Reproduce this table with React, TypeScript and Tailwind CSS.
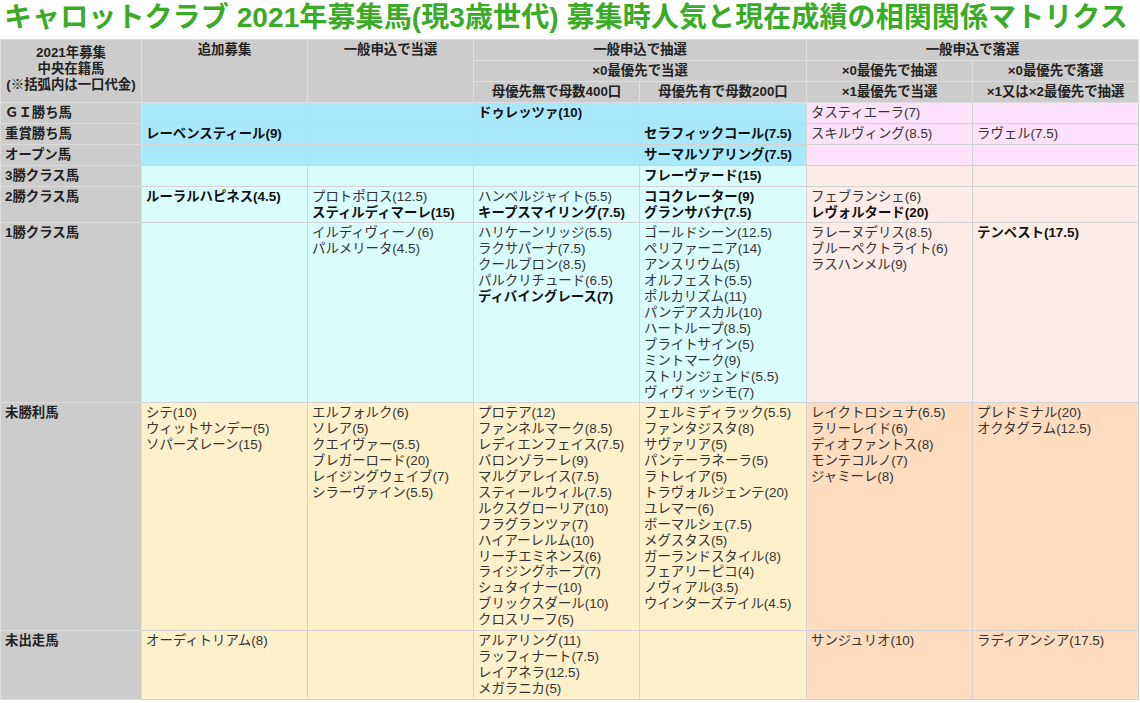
import React from "react";

type E = [string, boolean?];

const FONT = { fontFamily: '"Liberation Sans", "Noto Sans CJK JP", sans-serif' };

const rows: { label: string; g: number; cells: E[][] }[] = [
  { label: "ＧＩ勝ち馬", g: 0, cells: [[], [], [["ドゥレッツァ(10)", true]], [], [["タスティエーラ(7)"]], []] },
  {
    label: "重賞勝ち馬",
    g: 0,
    cells: [[["レーベンスティール(9)", true]], [], [], [["セラフィックコール(7.5)", true]], [["スキルヴィング(8.5)"]], [["ラヴェル(7.5)"]]],
  },
  { label: "オープン馬", g: 0, cells: [[], [], [], [["サーマルソアリング(7.5)", true]], [], []] },
  { label: "3勝クラス馬", g: 1, cells: [[], [], [], [["フレーヴァード(15)", true]], [], []] },
  {
    label: "2勝クラス馬",
    g: 1,
    cells: [
      [["ルーラルハピネス(4.5)", true]],
      [["プロトポロス(12.5)"], ["スティルディマーレ(15)", true]],
      [["ハンベルジャイト(5.5)"], ["キープスマイリング(7.5)", true]],
      [["ココクレーター(9)", true], ["グランサバナ(7.5)", true]],
      [["フェブランシェ(6)"], ["レヴォルタード(20)", true]],
      [],
    ],
  },
  {
    label: "1勝クラス馬",
    g: 1,
    cells: [
      [],
      [["イルディヴィーノ(6)"], ["パルメリータ(4.5)"]],
      [["ハリケーンリッジ(5.5)"], ["ラクサパーナ(7.5)"], ["クールブロン(8.5)"], ["パルクリチュード(6.5)"], ["ディバイングレース(7)", true]],
      [
        ["ゴールドシーン(12.5)"],
        ["ペリファーニア(14)"],
        ["アンスリウム(5)"],
        ["オルフェスト(5.5)"],
        ["ポルカリズム(11)"],
        ["パンデアスカル(10)"],
        ["ハートループ(8.5)"],
        ["ブライトサイン(5)"],
        ["ミントマーク(9)"],
        ["ストリンジェンド(5.5)"],
        ["ヴィヴィッシモ(7)"],
      ],
      [["ラレーヌデリス(8.5)"], ["ブルーペクトライト(6)"], ["ラスハンメル(9)"]],
      [["テンペスト(17.5)", true]],
    ],
  },
  {
    label: "未勝利馬",
    g: 2,
    cells: [
      [["シテ(10)"], ["ウィットサンデー(5)"], ["ソパーズレーン(15)"]],
      [["エルフォルク(6)"], ["ソレア(5)"], ["クエイヴァー(5.5)"], ["ブレガーロード(20)"], ["レイジングウェイブ(7)"], ["シラーヴァイン(5.5)"]],
      [
        ["プロテア(12)"],
        ["ファンネルマーク(8.5)"],
        ["レディエンフェイス(7.5)"],
        ["バロンゾラーレ(9)"],
        ["マルグアレイス(7.5)"],
        ["スティールウィル(7.5)"],
        ["ルクスグローリア(10)"],
        ["フラグランツァ(7)"],
        ["ハイアーレルム(10)"],
        ["リーチエミネンス(6)"],
        ["ライジングホープ(7)"],
        ["シュタイナー(10)"],
        ["ブリックスダール(10)"],
        ["クロスリーフ(5)"],
      ],
      [
        ["フェルミディラック(5.5)"],
        ["ファンタジスタ(8)"],
        ["サヴァリア(5)"],
        ["パンテーラネーラ(5)"],
        ["ラトレイア(5)"],
        ["トラヴォルジェンテ(20)"],
        ["ユレマー(6)"],
        ["ボーマルシェ(7.5)"],
        ["メグスタス(5)"],
        ["ガーランドスタイル(8)"],
        ["フェアリーピコ(4)"],
        ["ノヴィアル(3.5)"],
        ["ウインターズテイル(4.5)"],
      ],
      [["レイクトロシュナ(6.5)"], ["ラリーレイド(6)"], ["ディオファントス(8)"], ["モンテコルノ(7)"], ["ジャミーレ(8)"]],
      [["プレドミナル(20)"], ["オクタグラム(12.5)"]],
    ],
  },
  {
    label: "未出走馬",
    g: 2,
    cells: [
      [["オーディトリアム(8)"]],
      [],
      [["アルアリング(11)"], ["ラッフィナート(7.5)"], ["レイアネラ(12.5)"], ["メガラニカ(5)"]],
      [],
      [["サンジュリオ(10)"]],
      [["ラディアンシア(17.5)"]],
    ],
  },
];

const leftBg = ["bg-[#a9e8fa]", "bg-[#dafcfd]", "bg-[#fff0cc]"];
const rightBg = ["bg-[#fde1fa]", "bg-[#fdebe8]", "bg-[#fddcbf]"];

const td = "border border-[#d3d3d3] px-[4px] pt-[2px] pb-[2px] leading-[15.9px] align-top";
const th = "border border-[#dedede] bg-[#cccccc] px-[4px] pt-[2px] pb-[2px] leading-[16px] font-bold text-[#222222] text-center";

export default function App() {
  return (
    <div className="w-[1140px] h-[703px] overflow-hidden bg-white text-[13.4px]" style={FONT}>
      <div className="h-[39px] pl-[4px] pt-[1px] text-[28px] leading-[34px] font-bold text-[#3aab27] whitespace-nowrap tracking-[0.1px]">
        キャロットクラブ 2021年募集馬(現3歳世代) 募集時人気と現在成績の相関関係マトリクス
      </div>
      <table className="table-fixed border-collapse w-[1138px]">
        <colgroup>
          <col className="w-[141px]" />
          <col className="w-[166px]" />
          <col className="w-[166px]" />
          <col className="w-[166px]" />
          <col className="w-[167px]" />
          <col className="w-[166px]" />
          <col className="w-[166px]" />
        </colgroup>
        <thead>
          <tr>
            <th rowSpan={3} className={th + " align-middle pb-[6px]"}>
              2021年募集
              <br />
              中央在籍馬
              <br />
              (※括弧内は一口代金)
            </th>
            <th rowSpan={3} className={th + " align-top"}>
              追加募集
            </th>
            <th rowSpan={3} className={th + " align-top"}>
              一般申込で当選
            </th>
            <th colSpan={2} className={th}>
              一般申込で抽選
            </th>
            <th colSpan={2} className={th}>
              一般申込で落選
            </th>
          </tr>
          <tr>
            <th colSpan={2} className={th}>
              ×0最優先で当選
            </th>
            <th className={th}>×0最優先で抽選</th>
            <th className={th}>×0最優先で落選</th>
          </tr>
          <tr>
            <th className={th}>母優先無で母数400口</th>
            <th className={th}>母優先有で母数200口</th>
            <th className={th}>×1最優先で当選</th>
            <th className={th}>×1又は×2最優先で抽選</th>
          </tr>
        </thead>
        <tbody>
          {rows.map((r) => (
            <tr key={r.label}>
              <td className={td + " bg-[#cccccc] font-bold text-[#222222] border-[#dcdcdc]"}>{r.label}</td>
              {r.cells.map((c, i) => (
                <td key={i} className={td + " " + (i < 4 ? leftBg[r.g] : rightBg[r.g])}>
                  {c.map(([n, b]) => (
                    <div key={n} className={b ? "font-bold text-[#111111] whitespace-nowrap" : "text-[#333333] whitespace-nowrap"}>
                      {n}
                    </div>
                  ))}
                  {c.length === 0 ? <div>&nbsp;</div> : null}
                </td>
              ))}
            </tr>
          ))}
        </tbody>
      </table>
    </div>
  );
}
